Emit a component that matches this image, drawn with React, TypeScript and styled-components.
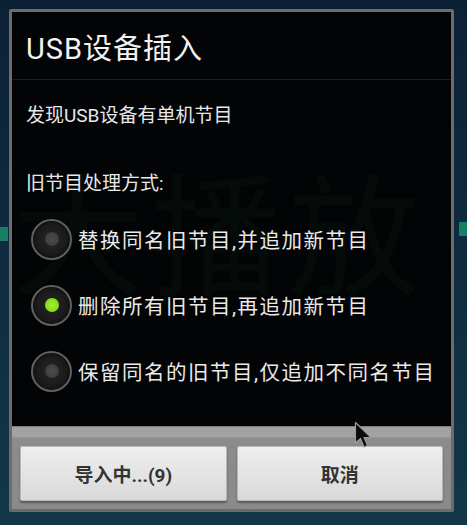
import React, { useState } from "react";
import styled, { createGlobalStyle } from "styled-components";

const Global = createGlobalStyle`
  html, body { margin: 0; padding: 0; }
  body {
    width: 467px;
    height: 525px;
    overflow: hidden;
    background: linear-gradient(180deg, #0c2136 0%, #0f2a40 45%, #123848 100%);
    font-family: "Roboto", "Noto Sans CJK SC", sans-serif;
  }
`;

const Screen = styled.div`
  position: relative;
  width: 467px;
  height: 525px;
  padding: 9px 13px 0 9px;
  box-sizing: border-box;
`;

const GlowBar = styled.span<{ $side: "left" | "right"; $top: number }>`
  position: absolute;
  top: ${(p) => p.$top}px;
  ${(p) => (p.$side === "left" ? "left: 0;" : "right: 0;")}
  width: 8px;
  height: 14px;
  background: #178062;
`;

const Dialog = styled.div`
  width: 445px;
  box-sizing: border-box;
  border: 3px solid #6c6c6c;
  border-radius: 2px;
  background: #030406;
  display: flex;
  flex-direction: column;
  overflow: hidden;
`;

const Header = styled.div`
  height: 67px;
  display: flex;
  align-items: center;
  padding: 0 14px;
  color: #f2f2f2;
  font-size: 29px;
  letter-spacing: 1px;
  border-bottom: 1px solid #1d1e20;
`;

const Body = styled.div`
  position: relative;
  display: flex;
  flex-direction: column;
  padding: 24px 14px 22px 14px;
  height: 346px;
  box-sizing: border-box;
`;

const Watermark = styled.div`
  position: absolute;
  left: 0;
  top: 82px;
  font-size: 132px;
  line-height: 1;
  color: #050b08;
  letter-spacing: 6px;
  white-space: nowrap;
  font-family: "Noto Sans CJK SC", sans-serif;
  pointer-events: none;
  z-index: 0;
`;

const Text = styled.div<{ $mt?: number }>`
  position: relative;
  z-index: 1;
  color: #e8e8e8;
  font-size: 19px;
  line-height: 24px;
  margin-top: ${(p) => p.$mt ?? 0}px;
`;

const Options = styled.div`
  position: relative;
  z-index: 1;
  margin-top: 10px;
  display: flex;
  flex-direction: column;
`;

const OptionRow = styled.label`
  height: 66px;
  display: flex;
  align-items: center;
  gap: 6px;
  padding-left: 5px;
  cursor: pointer;
  color: #eaeaea;
  font-size: 20.5px;
  letter-spacing: 1.5px;
  white-space: nowrap;
`;

const Radio = styled.span<{ $checked: boolean }>`
  width: 41px;
  height: 41px;
  box-sizing: border-box;
  border-radius: 50%;
  border: 2px solid #606060;
  background: radial-gradient(circle at 50% 50%, #262626 0%, #1b1b1b 55%, #121212 100%);
  box-shadow: inset 0 0 3px rgba(0, 0, 0, 0.8);
  display: flex;
  align-items: center;
  justify-content: center;
  flex-shrink: 0;
  &::after {
    content: "";
    width: 14px;
    height: 14px;
    border-radius: 50%;
    background: ${(p) =>
      p.$checked
        ? "radial-gradient(circle, #a4ec2e 0%, #86dc1a 70%, #5fa814 100%)"
        : "radial-gradient(circle, #4c4c4c 0%, #404040 60%, #2c2c2c 100%)"};
  }
`;

const Footer = styled.div`
  background: linear-gradient(180deg, #a2a2a2 0px, #a2a2a2 10px, #8c8c8c 11px, #8a8a8a 100%);
  padding: 19px 8px 8px 8px;
  display: flex;
  gap: 10px;
  border-top: 1px solid #7c7c7c;
`;

const Button = styled.button`
  flex: 1;
  height: 55px;
  border: 1px solid #b8b8b8;
  border-radius: 2px;
  background: linear-gradient(180deg, #eeeeee 0%, #e2e2e2 60%, #d8d8d8 100%);
  box-shadow: 0 2px 2px rgba(0, 0, 0, 0.35);
  color: #333333;
  font-family: "Roboto", "Noto Sans CJK SC", sans-serif;
  font-size: 19px;
  font-weight: 700;
  cursor: pointer;
`;

const Cursor = styled.svg`
  position: absolute;
  left: 354px;
  top: 421px;
  width: 20px;
  height: 29px;
  pointer-events: none;
`;

const options = [
  "替换同名旧节目,并追加新节目",
  "删除所有旧节目,再追加新节目",
  "保留同名的旧节目,仅追加不同名节目",
];

export default function App() {
  const [selected, setSelected] = useState(1);
  return (
    <>
      <Global />
      <Screen>
        <GlowBar $side="left" $top={227} />
        <GlowBar $side="right" $top={222} />
        <Dialog>
          <Header>USB设备插入</Header>
          <Body>
            <Watermark aria-hidden="true">大播放</Watermark>
            <Text>发现USB设备有单机节目</Text>
            <Text $mt={44}>旧节目处理方式:</Text>
            <Options>
              {options.map((o, i) => (
                <OptionRow key={o} onClick={() => setSelected(i)}>
                  <Radio $checked={selected === i} />
                  {o}
                </OptionRow>
              ))}
            </Options>
          </Body>
          <Footer>
            <Button>导入中...(9)</Button>
            <Button>取消</Button>
          </Footer>
        </Dialog>
        <Cursor viewBox="0 0 20 29">
          <path
            d="M1.5 1.5 L1.5 22 L6.5 17.5 L10 26 L13.5 24.5 L10 16.5 L17 16.5 Z"
            fill="#0a0a0a"
            stroke="#9a9a9a"
            strokeWidth="1.2"
            strokeLinejoin="round"
          />
        </Cursor>
      </Screen>
    </>
  );
}
